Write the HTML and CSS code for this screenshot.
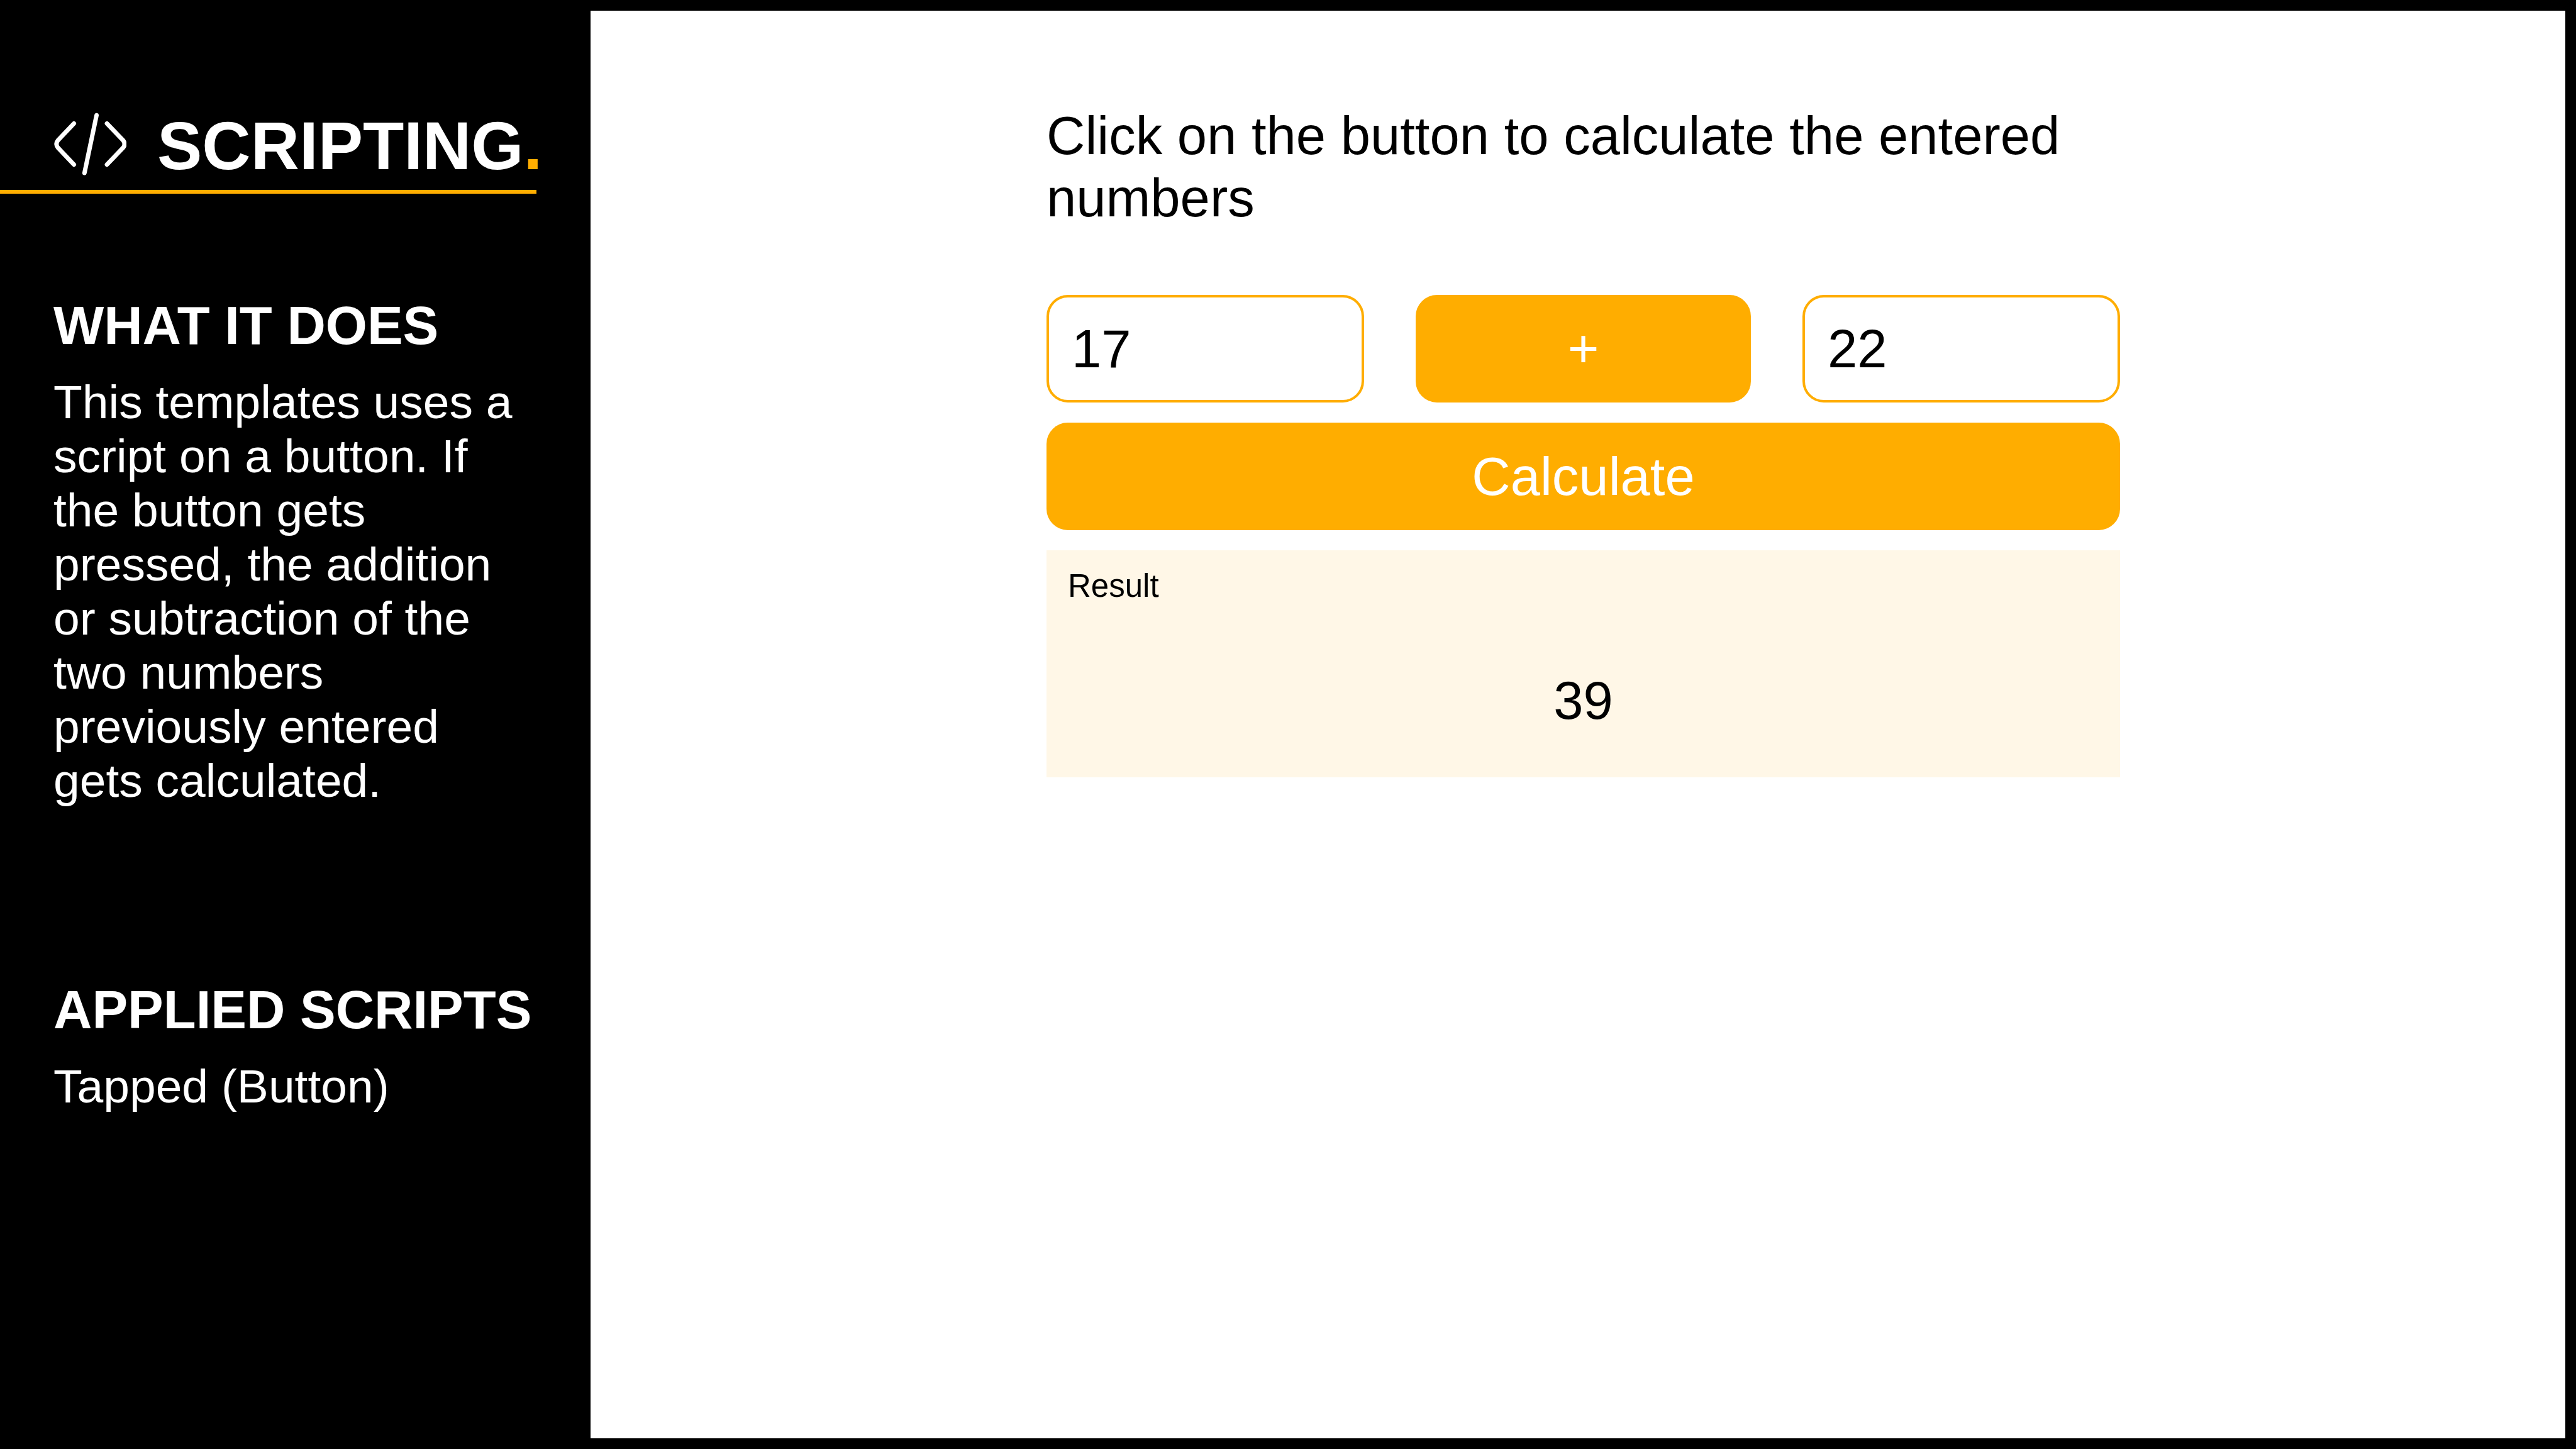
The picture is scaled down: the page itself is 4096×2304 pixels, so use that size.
FILE: index.html
```html
<!DOCTYPE html>
<html lang="en">
<head>
  <meta charset="utf-8">
  <meta name="viewport" content="width=device-width, initial-scale=1">
  <title>Scripting</title>
  <link rel="stylesheet" href="styles.css">
</head>
<body>
  <div class="page">
    <aside class="sidebar">
      <header class="brand">
        <svg class="brand-icon" viewBox="49 38 435 405" fill="none" stroke="currentColor" stroke-width="26" stroke-linecap="round" aria-hidden="true">
          <path d="M171 103L76 203Q58 226 76 248L171 348"/>
          <path d="M306 54L234 398"/>
          <path d="M368 103L464 203Q482 226 464 248L368 348"/>
        </svg>
        <h1 class="brand-title">SCRIPTING<span class="brand-dot">.</span></h1>
      </header>
      <section class="info">
        <h2 class="info-title">WHAT IT DOES</h2>
        <p class="info-text">This templates uses a script on a button. If the button gets pressed, the addition or subtraction of the two numbers previously entered gets calculated.</p>
      </section>
      <section class="info">
        <h2 class="info-title">APPLIED SCRIPTS</h2>
        <p class="info-text">Tapped (Button)</p>
      </section>
    </aside>
    <main class="main">
      <form class="calculator">
        <p class="intro">Click on the button to calculate the entered numbers</p>
        <div class="operands">
          <input class="number" type="text" inputmode="numeric" value="17" aria-label="First number">
          <button class="button" type="button">+</button>
          <input class="number" type="text" inputmode="numeric" value="22" aria-label="Second number">
        </div>
        <button class="button" type="button">Calculate</button>
        <div class="result">
          <label class="result-label" for="result">Result</label>
          <output class="result-value" id="result">39</output>
        </div>
      </form>
    </main>
  </div>
</body>
</html>
```
FILE: styles.css
```css
:root {
  --accent: #ffad00;
  --accent-light: #fff7e7;
}

* {
  box-sizing: border-box;
}

body,
h1,
h2,
p {
  margin: 0;
}

body {
  background: #000;
  color: #000;
  font-family: "Liberation Sans", Arial, sans-serif;
  font-size: 85px;
  line-height: 99px;
}

.page {
  display: flex;
  min-height: 100vh;
}

/* Sidebar */

.sidebar {
  flex: 0 0 939px;
  min-width: 0;
  padding: 171px 86px 86px 0;
  color: #fff;
}

.brand {
  display: flex;
  align-items: center;
  gap: 49px;
  padding: 0 0 8px 85px;
  border-bottom: 6px solid var(--accent);
  margin-bottom: 160px;
}

.brand-icon {
  flex: none;
  width: 116px;
  height: 108px;
}

.brand-title {
  min-width: 0;
  font-size: 107px;
  line-height: 123px;
  white-space: nowrap;
}

.brand-dot {
  color: var(--accent);
}

.info {
  padding-left: 85px;
}

.info + .info {
  margin-top: 272px;
}

.info-title {
  margin-bottom: 29px;
  font-size: 85px;
  line-height: 99px;
  white-space: nowrap;
}

.info-text {
  font-size: 75px;
  line-height: 86px;
}

/* Calculator */

.main {
  flex: 1;
  padding: 149px 0 85px 17px;
  border: solid #000;
  border-width: 17px 17px 17px 0;
  background: #fff;
}

.calculator {
  display: flex;
  flex-direction: column;
  gap: 32px;
  max-width: 1707px;
  margin: 0 auto;
}

.intro {
  margin-bottom: 73px;
}

.operands {
  display: grid;
  grid-template-columns: 1fr 533px 1fr;
  gap: 82px;
}

.number,
.button {
  width: 100%;
  height: 171px;
  border: 4px solid var(--accent);
  border-radius: 34px;
  font: inherit;
}

.number {
  min-width: 0;
  padding: 0 36px;
  background: #fff;
  color: #000;
}

.button {
  padding: 0;
  background: var(--accent);
  color: #fff;
  cursor: pointer;
}

.result {
  display: flex;
  flex-direction: column;
  gap: 103px;
  padding: 27px 34px 73px;
  background: var(--accent-light);
}

.result-label {
  font-size: 51px;
  line-height: 59px;
}

.result-value {
  text-align: center;
}
```
